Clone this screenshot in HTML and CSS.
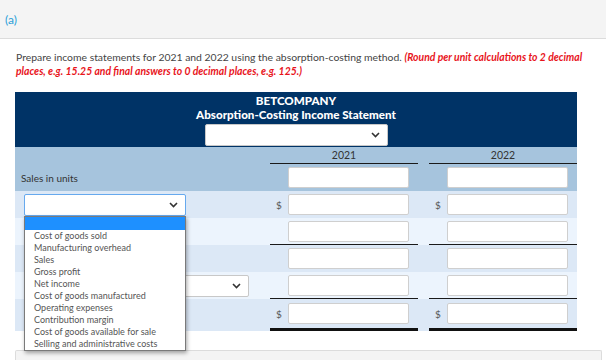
FILE: index.html
```html
<!DOCTYPE html>
<html lang="en">
<head>
	<meta charset="UTF-8">
	<title>Absorption-Costing Income Statement</title>
	<link rel="stylesheet" href="styles.css">
</head>
<body>
	<div class="part-bar"><span class="part-label">(a)</span></div>

	<p class="prompt">Prepare income statements for 2021 and 2022 using the absorption-costing method. <em class="note">(Round per unit calculations to 2 decimal places, e.g. 15.25 and final answers to 0 decimal places, e.g. 125.)</em></p>

	<div class="statement">
		<!-- 标题 -->
		<div class="st-head">
			<div class="st-company">BETCOMPANY</div>
			<div class="st-title">Absorption-Costing Income Statement</div>
			<div class="pick pick-head">
				<svg class="chev" width="9" height="6" viewBox="0 0 9 6"><path d="M1 1l3.5 3.5L8 1" fill="none" stroke="#333" stroke-width="1.6"/></svg>
			</div>
		</div>

		<div class="st-top">
			<div class="row row-years">
				<div></div>
				<div class="year">2021</div>
				<div class="year">2022</div>
			</div>
			<div class="row row-units">
				<div class="label">Sales in units</div>
				<div class="cell"><span class="cur"></span><span class="box"></span></div>
				<div class="cell"><span class="cur"></span><span class="box"></span></div>
			</div>
		</div>

		<div class="row dark">
			<div class="label">
				<div class="pick pick-open">
					<svg class="chev" width="9" height="6" viewBox="0 0 9 6"><path d="M1 1l3.5 3.5L8 1" fill="none" stroke="#333" stroke-width="1.6"/></svg>
					<!-- 下拉菜单 -->
					<ul class="menu">
						<li class="on">&nbsp;</li>
						<li>Cost of goods sold</li>
						<li>Manufacturing overhead</li>
						<li>Sales</li>
						<li>Gross profit</li>
						<li>Net income</li>
						<li>Cost of goods manufactured</li>
						<li>Operating expenses</li>
						<li>Contribution margin</li>
						<li>Cost of goods available for sale</li>
						<li>Selling and administrative costs</li>
					</ul>
				</div>
			</div>
			<div class="cell"><span class="cur">$</span><span class="box"></span></div>
			<div class="cell"><span class="cur">$</span><span class="box"></span></div>
		</div>
		<div class="row light">
			<div class="label"></div>
			<div class="cell ruled"><span class="cur"></span><span class="box"></span></div>
			<div class="cell ruled"><span class="cur"></span><span class="box"></span></div>
		</div>
		<div class="row dark">
			<div class="label"></div>
			<div class="cell"><span class="cur"></span><span class="box"></span></div>
			<div class="cell"><span class="cur"></span><span class="box"></span></div>
		</div>
		<div class="row light">
			<div class="label indent">
				<div class="pick pick-wide">
					<svg class="chev" width="9" height="6" viewBox="0 0 9 6"><path d="M1 1l3.5 3.5L8 1" fill="none" stroke="#333" stroke-width="1.6"/></svg>
				</div>
			</div>
			<div class="cell ruled"><span class="cur"></span><span class="box"></span></div>
			<div class="cell ruled"><span class="cur"></span><span class="box"></span></div>
		</div>
		<div class="row dark last">
			<div class="label"></div>
			<div class="cell total"><span class="cur">$</span><span class="box"></span></div>
			<div class="cell total"><span class="cur">$</span><span class="box"></span></div>
		</div>
	</div>

	<div class="next-part"></div>
</body>
</html>
```

FILE: styles.css
```css
*{margin:0;padding:0;box-sizing:border-box;}
body {
	font-family: Lato, "Open Sans", sans-serif;
	color: #333;
	background: #fff;
	width: 606px;
	height: 360px;
	overflow: hidden;
}
.part-bar {
	height: 39px;
	display: flex;
	align-items: center;
	padding-left: 5px;
	background: #f4f4f4;
	border-bottom: 1px solid #dcdcdc;
}
.part-label {
	color: #2a9fd8;
	font-size: 12px;
}
.prompt {
	padding: 11px 16px 0 16px;
	font-size: 10.4px;
	line-height: 14px;
	color: #444;
}
.note {
	color: #e8141c;
	font-weight: bold;
}
.statement {
	margin: 14px 0 0 15px;
	width: 562px;
	display: flex;
	flex-direction: column;
}
.st-head {
	background: #003366;
	color: #fff;
	height: 55px;
	display: flex;
	flex-direction: column;
	align-items: center;
	padding-top: 2px;
	font-weight: 900;
	font-size: 11.6px;
	line-height: 14px;
}
.pick {
	position: relative;
	height: 22px;
	background: #fff;
	border: 1px solid #c8c8c8;
	border-radius: 2px;
	display: flex;
	align-items: center;
	justify-content: flex-end;
	padding-right: 7px;
}
.pick-head {
	width: 183px;
	margin-top: 2px;
}
.chev {
	display: block;
}
.st-top {
	background: #a6c4dd;
}
.row {
	display: grid;
	grid-template-columns: 244px 148px 148px;
	column-gap: 11px;
	height: 27px;
}
.row-years {
	height: 17px;
}
.year {
	text-align: center;
	font-size: 10.5px;
	line-height: 15px;
	color: #333;
	border-bottom: 1px solid #1a1a1a;
	padding-top: 1px;
}
.row-units {
	height: 27px;
}
.label {
	display: flex;
	align-items: center;
	padding-left: 6px;
	font-size: 10px;
	color: #333;
}
.dark {
	background: #dce8f6;
}
.light {
	background: #ecf4fd;
}
.cell {
	display: flex;
	align-items: center;
	padding-left: 6px;
}
.ruled {
	border-bottom: 1px solid #1a1a1a;
}
.last {
	height: 32px;
}
.total {
	border-bottom: 3px solid #111;
}
.cur {
	width: 12px;
	font-size: 10px;
	color: #555;
}
.box {
	width: 121px;
	height: 21px;
	background: #fff;
	border: 1px solid #cfcfcf;
	border-radius: 2px;
}
.dark .label {
	padding-left: 9px;
}
.pick-open {
	width: 162px;
	height: 22px;
	border-color: #66a9ee;
}
.indent {
	padding-left: 19px;
}
.pick-wide {
	width: 215px;
	height: 22px;
}
.menu {
	position: absolute;
	left: -1px;
	top: 21px;
	width: 162px;
	list-style: none;
	background: #fff;
	border: 1px solid #7a7a7a;
	box-shadow: 1px 2px 4px rgba(0,0,0,.35);
	z-index: 5;
}
.menu li {
	height: 12px;
	line-height: 12px;
	font-size: 9px;
	padding-left: 9px;
	color: #555;
	white-space: nowrap;
}
.menu li.on {
	height: 13px;
	background: #1e90ff;
}
.next-part {
	margin: 19px 0 0 15px;
	width: 587px;
	height: 10px;
	background: #f4f4f4;
	border: 1px solid #dcdcdc;
	border-bottom: none;
	border-radius: 2px 2px 0 0;
}
```
